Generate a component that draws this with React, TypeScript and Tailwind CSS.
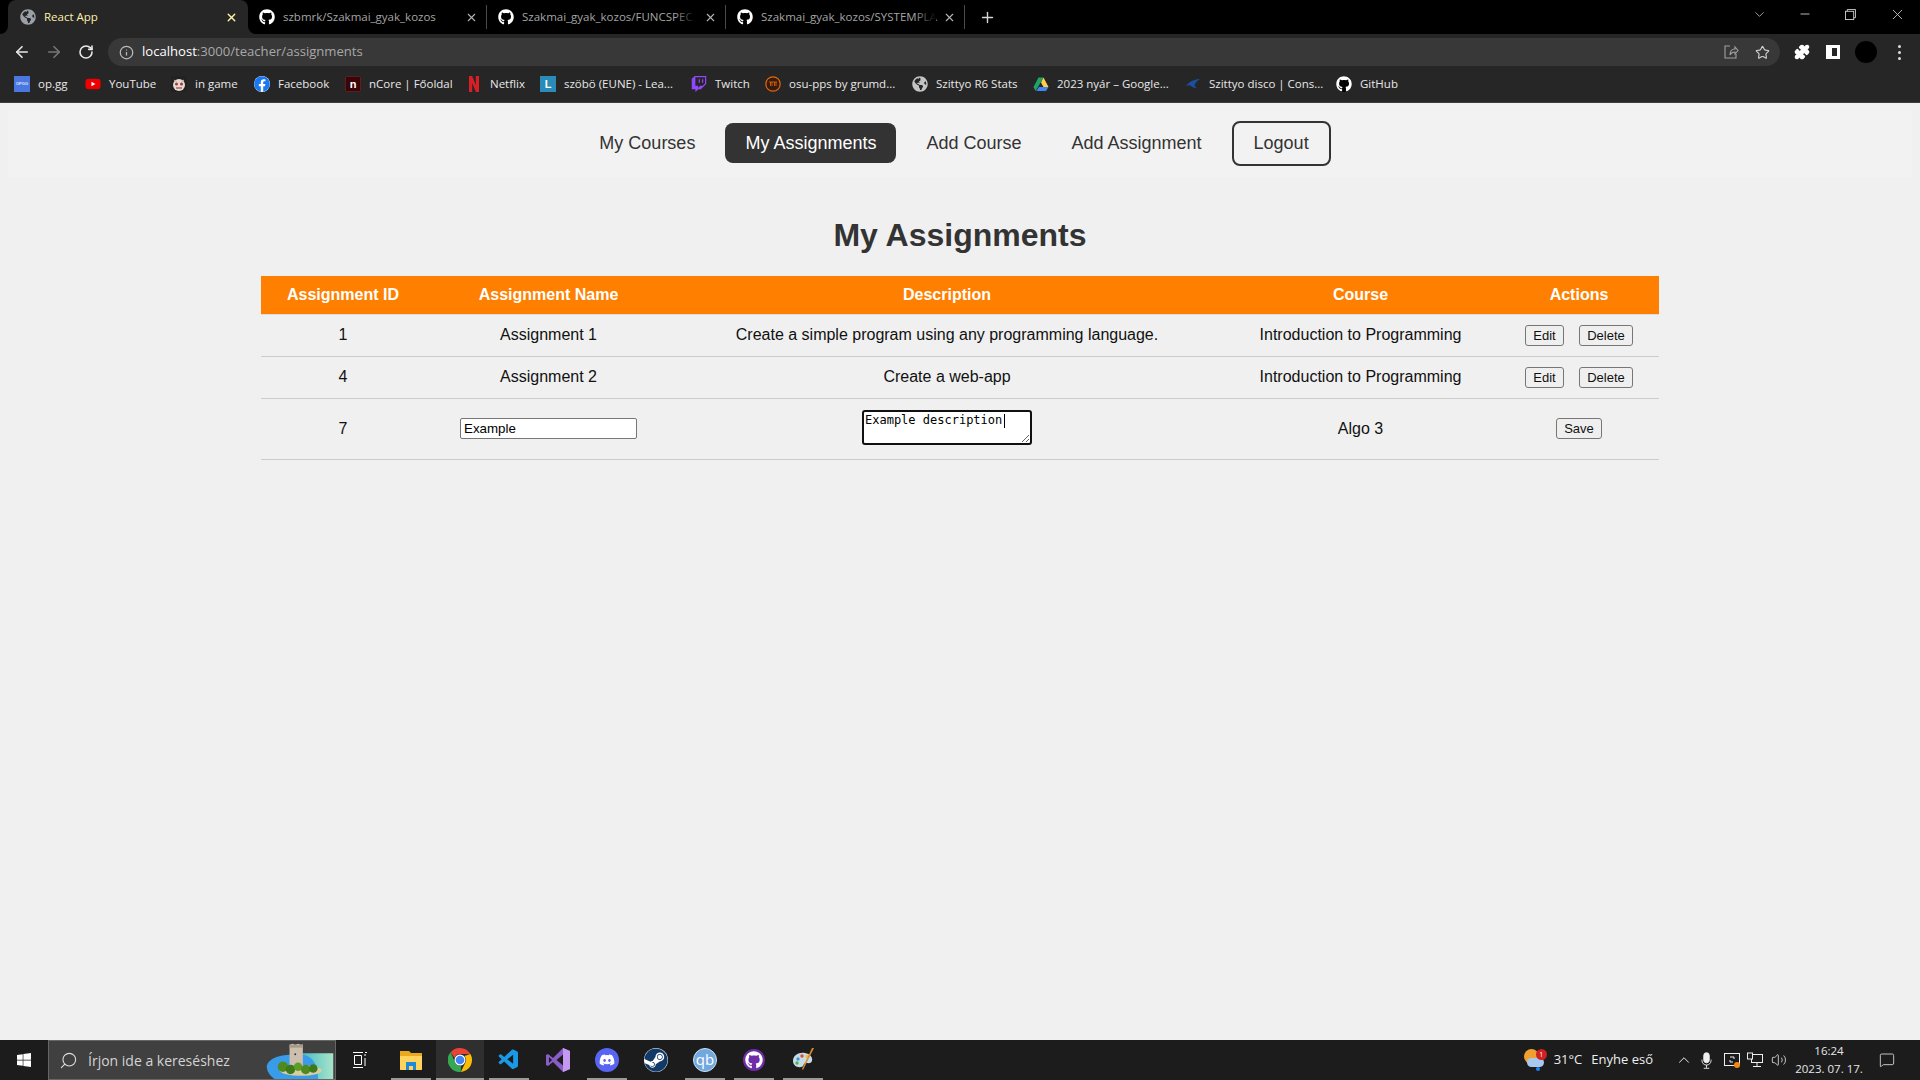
import { ArrowLeft, ArrowRight, RotateCw, Info, Star, Puzzle, X, Plus, ChevronDown, ChevronUp, Minus, Search, Volume2, MessageSquare } from "lucide-react";
import { FaGithub, FaGlobeAmericas, FaYoutube, FaFacebook, FaTwitch, FaDiscord, FaSteam, FaWindows } from "react-icons/fa";
import { VscVscode } from "react-icons/vsc";
import type { ReactNode } from "react";

const sans = "font-['Open_Sans','Noto_Sans',sans-serif]";

function GithubFav() {
  return (
    <span className="w-4 h-4 rounded-full bg-black flex items-center justify-center shrink-0">
      <FaGithub className="w-4 h-4 text-white" />
    </span>
  );
}

function Tab({ title, width, textWidth, fade }: { title: string; width: string; textWidth: string; fade?: boolean }) {
  return (
    <div className={`flex items-center h-[34px] shrink-0 ${width}`}>
      <GithubFav />
      <span className={`relative ml-2 text-[11.500px] text-[#a5a5a5] whitespace-nowrap ${textWidth} ${sans}`}>
        {title}
        {fade && <span className="absolute right-0 top-0 bottom-0 w-[22px] bg-gradient-to-r from-transparent to-black" />}
      </span>
      <X className="w-[13px] h-[13px] text-[#b5b5b5] ml-auto mr-[8px]" strokeWidth={2} />
      <span className="w-px h-[24px] bg-[#4a4a4a]" />
    </div>
  );
}

function Drive() {
  return (
    <svg viewBox="0 0 16 16" className="w-4 h-4">
      <path d="M5.500 1.500h5L5 11 2.500 15 .5 11z" fill="#1fa463" />
      <path d="M10.500 1.500l5 9.500h-5L8 6.500z" fill="#ffd04b" />
      <path d="M3.300 15l2.700-4h9.500l-2.500 4z" fill="#4285f4" />
    </svg>
  );
}

const bookmarks: { icon: ReactNode; label: string; w: string }[] = [
  { icon: <span className="w-4 h-4 bg-[#4a78e0] text-[4px] font-bold text-white/80 flex items-center justify-center font-['Liberation_Sans',sans-serif]">OPGG</span>, label: "op.gg", w: "w-[31px]" },
  { icon: <span className="w-4 h-4 flex items-center justify-center relative"><span className="absolute w-2 h-2 bg-white" /><FaYoutube className="w-4 h-4 text-[#f00000] relative" /></span>, label: "YouTube", w: "w-[46px]" },
  { icon: <svg viewBox="0 0 16 16" className="w-4 h-4"><rect width="16" height="16" fill="#222" /><circle cx="8" cy="9" r="6" fill="#e8d8d0" /><circle cx="5.500" cy="8" r="1.500" fill="#a33" /><circle cx="10.500" cy="8" r="1.500" fill="#a33" /><path d="M5 12h6" stroke="#733" /><path d="M3 4l3 2M13 4l-3 2" stroke="#bbb" /></svg>, label: "in game", w: "w-[43px]" },
  { icon: <span className="w-4 h-4 flex items-center justify-center relative rounded-full bg-white"><FaFacebook className="w-4 h-4 text-[#1877f2]" /></span>, label: "Facebook", w: "w-[51px]" },
  { icon: <span className="w-4 h-4 bg-[#3a0508] border border-[#5a2020] rounded-[2px] text-white text-[11px] leading-[11px] font-bold flex items-center justify-center font-['Liberation_Sans',sans-serif]">n</span>, label: "nCore | Főoldal", w: "w-[81px]" },
  { icon: <svg viewBox="0 0 16 16" className="w-4 h-4"><path d="M3 0h3.200l3.600 9V0H13v16h-3.200L6.200 7v9H3z" fill="#d81f26" /></svg>, label: "Netflix", w: "w-[34px]" },
  { icon: <span className="w-4 h-4 bg-[#2a8ab8] text-white text-[11px] leading-[11px] font-bold flex items-center justify-center font-['Liberation_Sans',sans-serif]">L</span>, label: "szöbö (EUNE) - Lea...", w: "w-[111px]" },
  { icon: <FaTwitch className="w-4 h-4 text-[#9146ff]" />, label: "Twitch", w: "w-[34px]" },
  { icon: <svg viewBox="0 0 16 16" className="w-4 h-4"><circle cx="8" cy="8" r="7.200" fill="#3a1a08" stroke="#e06a14" strokeWidth="1.200" /><path d="M4 6h8M5.500 6v4M7 6v4M9.500 6v4M11 6v4" stroke="#e06a14" strokeWidth=".8" /></svg>, label: "osu-pps by grumd...", w: "w-[107px]" },
  { icon: <FaGlobeAmericas className="w-4 h-4 text-[#c4c4c4]" />, label: "Szittyo R6 Stats", w: "w-[81px]" },
  { icon: <Drive />, label: "2023 nyár – Google...", w: "w-[112px]" },
  { icon: <svg viewBox="0 0 16 16" className="w-4 h-4"><path d="M15 3C10 3 5 5 1 10c3-1 4-1 5 0 1 1 3 2 6 2-2-1-3-3-2-4 1-2 3-4 5-5z" fill="#1b4fa0" /></svg>, label: "Szittyo disco | Cons...", w: "w-[111px]" },
  { icon: <GithubFav />, label: "GitHub", w: "w-[37px]" },
];

function BrowserChrome() {
  return (
    <div className={`bg-[#262626] text-white shrink-0 ${sans}`}>
      {/* Tabs */}
      <div className="h-[34px] bg-black flex items-center pl-2">
        <div className="relative flex items-center w-[240px] h-[34px] bg-[#262626] rounded-t-lg pl-3 pr-[10px]">
          <svg viewBox="0 0 8 8" className="absolute -left-2 bottom-0 w-2 h-2"><path d="M8 0v8H0a8 8 0 0 0 8-8z" fill="#262626" /></svg>
          <svg viewBox="0 0 8 8" className="absolute -right-2 bottom-0 w-2 h-2"><path d="M0 0v8h8a8 8 0 0 1-8-8z" fill="#262626" /></svg>
          <FaGlobeAmericas className="w-4 h-4 text-[#9aa0a6]" />
          <span className="ml-2 text-[11.500px] text-[#fdf2a8]">React App</span>
          <X className="w-[13px] h-[13px] text-[#fdf2a8] ml-auto" strokeWidth={2.500} />
        </div>
        <div className="flex items-center pl-[11px]">
          <Tab title="szbmrk/Szakmai_gyak_kozos" width="w-[228px]" textWidth="w-[160px]" />
          <div className="w-[11px]" />
          <Tab title="Szakmai_gyak_kozos/FUNCSPEC." width="w-[228px]" textWidth="w-[174px]" fade />
          <div className="w-[11px]" />
          <Tab title="Szakmai_gyak_kozos/SYSTEMPLA" width="w-[228px]" textWidth="w-[175px]" fade />
        </div>
        <Plus className="w-[17px] h-[17px] text-[#d5d5d5] ml-[14px]" strokeWidth={2} />
        <div className="ml-auto mb-[6px] flex items-center text-[#d0d0d0]">
          <ChevronDown className="w-[15px] h-[15px]" strokeWidth={1.200} />
          <Minus className="w-[14px] h-[14px] ml-[31px]" strokeWidth={1.500} />
          <svg viewBox="0 0 12 12" className="w-[11px] h-[11px] ml-[33px]" fill="none" stroke="currentColor"><rect x=".5" y="2.500" width="9" height="9" /><path d="M2.500 2.500v-2h9v9h-2" /></svg>
          <X className="w-[17px] h-[17px] ml-[33px] mr-[14px]" strokeWidth={1.200} />
        </div>
      </div>
      {/* Address bar */}
      <div className="h-[34px] pt-[2px] flex items-center">
        <ArrowLeft className="w-[18px] h-[18px] ml-[13px] text-[#e8e8e8]" strokeWidth={2.200} />
        <ArrowRight className="w-[18px] h-[18px] ml-[14px] text-[#777]" strokeWidth={2.200} />
        <RotateCw className="w-4 h-4 ml-[15px] text-[#e8e8e8]" strokeWidth={2.400} />
        <div className="ml-[14px] w-[1672px] h-[28px] rounded-full bg-[#383838] flex items-center pl-[11px] pr-[10px]">
          <Info className="w-[15px] h-[15px] text-[#bbb]" />
          <span className="ml-[8px] text-[13.100px] text-white">localhost<span className="text-[#a8a8a8]">:3000/teacher/assignments</span></span>
          <svg viewBox="0 0 16 16" className="w-4 h-4 ml-auto" fill="none" stroke="#a0a0a0" strokeWidth="1.100"><path d="M7 2H2v12h11v-4" /><path d="M7 11c0-4 2-6 5-6V3l3 3.500L12 10V8c-2 0-4 1-5 3z" /></svg>
          <Star className="w-[15px] h-[15px] ml-4 text-[#d0d0d0]" strokeWidth={1.800} />
        </div>
        <Puzzle className="w-4 h-4 ml-[14px] text-white fill-white" />
        <span className="ml-[16px] w-[14px] h-[14px] border-white border-[3px] border-l-[6px] bg-[#262626] block" />
        <span className="ml-[15px] w-[22px] h-[22px] rounded-full bg-black block" />
        <span className="ml-[21px] flex flex-col gap-[3px]">
          <span className="w-[3px] h-[3px] rounded-full bg-[#ddd]" />
          <span className="w-[3px] h-[3px] rounded-full bg-[#ddd]" />
          <span className="w-[3px] h-[3px] rounded-full bg-[#ddd]" />
        </span>
      </div>
      {/* Bookmarks */}
      <div className="h-[35px] pb-[2px] flex items-center gap-[16px] pl-[14px] border-b border-[#3c3c3c]">
        {bookmarks.map((b) => (
          <div key={b.label} className="flex items-center gap-2 shrink-0">
            {b.icon}
            <span className={`text-[11.500px] text-[#e8e8e8] whitespace-nowrap ${b.w}`}>{b.label}</span>
          </div>
        ))}
      </div>
    </div>
  );
}

const navLinks = [
  { label: "My Courses" },
  { label: "My Assignments", active: true },
  { label: "Add Course" },
  { label: "Add Assignment" },
];

function Nav() {
  return (
    <nav className="mx-2 mt-2 h-[66px] bg-[#f2f2f2] flex items-center justify-center gap-[10px] pr-[10px] pb-[2px] text-[18px] text-[#333]">
      {navLinks.map((l) => (
        <a key={l.label} className={`px-[20px] h-[40px] flex items-center rounded-[8px] ${l.active ? "bg-[#333] text-white" : ""}`}>
          {l.label}
        </a>
      ))}
      <button className="px-[20px] h-[45px] rounded-[8px] border-2 border-[#333] text-[#333]">Logout</button>
    </nav>
  );
}

function SmallButton({ children, width }: { children: string; width: string }) {
  return (
    <button className={`h-[21px] text-[13px] leading-[15px] text-[#111] bg-[#efefef] border border-[#767676] rounded-[3px] ${width}`}>
      {children}
    </button>
  );
}

const rows = [
  { id: 1, name: "Assignment 1", description: "Create a simple program using any programming language.", course: "Introduction to Programming" },
  { id: 4, name: "Assignment 2", description: "Create a web-app", course: "Introduction to Programming" },
];

function Table() {
  const cell = "border-b border-[#ccc] text-center";
  return (
    <table className="w-[1398px] mx-auto table-fixed border-collapse text-[16px] text-[#111]">
      <thead>
        <tr className="h-[38px] bg-[#ff8000] text-white font-bold border-b border-[#ddd]">
          <th className="w-[164px]">Assignment ID</th>
          <th className="w-[247px]">Assignment Name</th>
          <th className="w-[550px]">Description</th>
          <th className="w-[277px]">Course</th>
          <th>Actions</th>
        </tr>
      </thead>
      <tbody>
        {rows.map((r) => (
          <tr key={r.id} className="h-[42px]">
            <td className={cell}>{r.id}</td>
            <td className={cell}>{r.name}</td>
            <td className={cell}>{r.description}</td>
            <td className={cell}>{r.course}</td>
            <td className={cell}>
              <div className="flex justify-center gap-[15px]">
                <SmallButton width="w-[39px]">Edit</SmallButton>
                <SmallButton width="w-[54px]">Delete</SmallButton>
              </div>
            </td>
          </tr>
        ))}
        <tr className="h-[61px]">
          <td className={cell}>7</td>
          <td className={cell}>
            <input
              readOnly
              value="Example"
              className="w-[177px] h-[21px] mb-[2px] px-[3px] text-[13.333px] text-black bg-white border border-[#767676] rounded-[2px] align-middle"
            />
          </td>
          <td className={cell}>
            <div className="relative w-[170px] h-[35px] mb-[2px] mx-auto">
              <textarea
                readOnly
                value="Example description"
                className="block w-[170px] h-[35px] px-[1px] pt-[1px] pb-0 text-[12px] leading-[14px] text-black bg-white border-2 border-[#101010] rounded-[3px] resize font-['DejaVu_Sans_Mono',monospace]"
              />
              <span className="absolute left-[142px] top-[4px] w-px h-[14px] bg-black" />
            </div>
          </td>
          <td className={cell}>Algo 3</td>
          <td className={cell}>
            <div className="flex justify-center mb-[1px]">
              <SmallButton width="w-[46px]">Save</SmallButton>
            </div>
          </td>
        </tr>
      </tbody>
    </table>
  );
}

function Island() {
  return (
    <svg viewBox="0 0 70 40" className="absolute right-0 top-0 w-[70px] h-[38px]">
      <defs>
        <linearGradient id="sea" x1="0" x2="1">
          <stop offset="0" stopColor="#35b4c4" />
          <stop offset="1" stopColor="#a8e4c8" />
        </linearGradient>
      </defs>
      <path d="M30 13h40v27H30z" fill="url(#sea)" />
      <path d="M0 26c2-8 14-12 34-12 10 0 20 6 20 26H8C3 36 0 32 0 26z" fill="#3a9be8" />
      <ellipse cx="36" cy="31" rx="22" ry="5.500" fill="#d8cfa0" />
      <path d="M24 4l3-1 3 1 3-1 3 1 2-.5 0 22H24z" fill="#cdbfae" />
      <path d="M24 4h14v3H24z" fill="#a89a8a" />
      <circle cx="30" cy="14" r="1" fill="#333" />
      <circle cx="17" cy="27" r="5.500" fill="#4e8a1e" />
      <circle cx="25" cy="30" r="5" fill="#3f7a1a" />
      <circle cx="33" cy="27" r="4.500" fill="#5e9c28" />
      <circle cx="41" cy="30" r="5" fill="#4e8a1e" />
      <circle cx="49" cy="29" r="4.500" fill="#3f7a1a" />
    </svg>
  );
}

function AppIcon({ under, active, children }: { under?: boolean; active?: boolean; children: ReactNode }) {
  return (
    <div className={`relative w-[48px] h-10 flex items-center justify-center shrink-0 ${active ? "bg-[#2f2f2f]" : ""}`}>
      {children}
      {under && <span className={`absolute bottom-0 h-[2px] bg-[#9a9a9a] ${active ? "inset-x-0" : "inset-x-1"}`} />}
    </div>
  );
}

function Taskbar() {
  return (
    <div className={`h-10 bg-[#1c1c1c] flex items-center shrink-0 text-white ${sans}`}>
      <div className="w-12 flex justify-center">
        <FaWindows className="w-4 h-4 text-white" />
      </div>
      <div className="relative w-[288px] h-10 bg-[#404040] border border-[#666] flex items-center pl-[10px]">
        <Search className="w-[19px] h-[19px] text-[#ddd] -scale-x-100" strokeWidth={1.400} />
        <span className="ml-[10px] text-[14px] text-[#d4d4d4]">Írjon ide a kereséshez</span>
        <Island />
      </div>
      <div className="w-[48px] flex justify-center">
        <svg viewBox="0 0 16 16" className="w-4 h-4" fill="none" stroke="#fff"><path d="M1 .5h10M1 15.500h10M2.500 3.500h7v9h-7zM13 2v2M13 6v8" /><path d="M13 .5h2" /></svg>
      </div>
      <div className="flex items-center gap-[1px] ml-[3px]">
        <AppIcon under>
          <svg viewBox="0 0 24 24" className="w-6 h-6"><path d="M1 3h9l2 2h11v16a1 1 0 0 1-1 1H2a1 1 0 0 1-1-1z" fill="#e8a820" /><path d="M1 8h22v13a1 1 0 0 1-1 1H2a1 1 0 0 1-1-1z" fill="#ffd35c" /><path d="M7 22v-8h10v8z" fill="#1c8ad8" /><path d="M10 22v-4h4v4z" fill="#ffd35c" /></svg>
        </AppIcon>
        <AppIcon under active>
          <svg viewBox="0 0 24 24" className="w-6 h-6">
            <path d="M12 0a12 12 0 0 1 10.400 6H12a6 6 0 0 0-5.600 3.800L2.600 4.300A12 12 0 0 1 12 0z" fill="#ea4335" />
            <path d="M22.400 6A12 12 0 0 1 12.800 24L17.200 15A6 6 0 0 0 16.500 8z" fill="#fbbc05" />
            <path d="M2.600 4.300L7.300 15A6 6 0 0 0 13 18l-.2 6A12 12 0 0 1 2.600 4.300z" fill="#34a853" />
            <circle cx="12" cy="12" r="5.500" fill="#fff" />
            <circle cx="12" cy="12" r="4.300" fill="#4285f4" />
          </svg>
        </AppIcon>
        <AppIcon under>
          <VscVscode className="w-6 h-6 text-[#1a9ae6]" />
        </AppIcon>
        <AppIcon>
          <svg viewBox="0 0 24 24" className="w-6 h-6"><path d="M17 0l7 3v18l-7 3-10-10-5 4-2-1V7l2-1 5 4z" fill="#8a5cc8" /><path d="M17 0l7 3v18l-7 3z" fill="#c49af0" /><path d="M17 6.500L10.500 12l6.500 5.500z" fill="#1c1c1c" /><path d="M3 9v6l3-3z" fill="#1c1c1c" /></svg>
        </AppIcon>
        <AppIcon under>
          <span className="w-6 h-6 rounded-full bg-[#5865f2] flex items-center justify-center">
            <FaDiscord className="w-4 h-4 text-white" />
          </span>
        </AppIcon>
        <AppIcon>
          <span className="w-6 h-6 rounded-full bg-white flex items-center justify-center">
            <FaSteam className="w-6 h-6 text-[#123a68]" />
          </span>
        </AppIcon>
        <AppIcon under>
          <span className="w-6 h-6 rounded-full bg-[#72a8e0] border border-[#cfe0f2] text-white text-[15px] leading-none flex items-center justify-center pb-[2px]">qb</span>
        </AppIcon>
        <AppIcon under>
          <span className="w-[22px] h-[22px] rounded-full bg-[#6f2da8] flex items-center justify-center">
            <FaGithub className="w-[18px] h-[18px] text-white" />
          </span>
        </AppIcon>
        <AppIcon under>
          <svg viewBox="0 0 24 24" className="w-6 h-6">
            <path d="M2 13c0-6 6-9 12-8 5 1 8 4 7 8-1 3-4 2-6 2-3 0-2 4-5 4-4 1-8-2-8-6z" fill="#c8dce8" />
            <circle cx="7" cy="11" r="1.700" fill="#3a9ad8" />
            <circle cx="11" cy="8" r="1.700" fill="#e04838" />
            <circle cx="16" cy="8.500" r="1.700" fill="#f0c030" />
            <circle cx="6" cy="15" r="1.700" fill="#50b848" />
            <path d="M23 0L12 22l-1-1L21 0z" fill="#d88a30" />
          </svg>
        </AppIcon>
      </div>
      {/* Tray */}
      <div className="ml-auto flex items-center h-10">
        <div className="relative w-[22px] h-[22px]">
          <span className="absolute left-0 top-0 w-[15px] h-[15px] rounded-full bg-[#f0a030]" />
          <span className="absolute left-[3px] top-[9px] w-[17px] h-[9px] rounded-full bg-[#a8c8f0]" />
          <span className="absolute left-[12px] bottom-0 w-[4px] h-[4px] rounded-full bg-[#2080f0]" />
          <span className="absolute right-[-1px] top-0 w-[11px] h-[11px] rounded-full bg-[#d02020] text-white text-[7px] leading-[11px] text-center">1</span>
        </div>
        <span className="ml-[8px] text-[13px] text-[#eee]">31°C</span>
        <span className="ml-[9px] text-[13px] text-[#eee]">Enyhe eső</span>
        <ChevronUp className="w-[18px] h-[18px] ml-[22px] text-[#eee]" strokeWidth={1.300} />
        <svg viewBox="0 0 12 18" className="w-[11px] h-[17px] ml-[8px]" fill="none" stroke="#eee"><rect x="3" y=".5" width="6" height="11" rx="3" fill="#eee" /><path d="M1 8v1a5 5 0 0 0 10 0V8M6 14v3M3 17.500h6" /></svg>
        <svg viewBox="0 0 16 16" className="w-4 h-4 ml-[12px]" fill="none" stroke="#eee"><rect x=".5" y="1.500" width="15" height="12" /><path d="M6 5h4v2M9 10H6V8" /><circle cx="13" cy="13" r="3" fill="#f08a10" stroke="none" /></svg>
        <svg viewBox="0 0 16 16" className="w-4 h-4 ml-[7px]" fill="none" stroke="#eee"><rect x="4.500" y="2.500" width="11" height="8" /><rect x=".5" y="1" width="5" height="6" fill="#1c1c1c" /><path d="M10 11v3M6 14.500h8" /></svg>
        <Volume2 className="w-4 h-4 ml-[8px] text-[#eee]" strokeWidth={1.200} />
        <div className="ml-[9px] w-[66px] flex flex-col items-center text-[11.500px] leading-[18px] text-[#e6e6e6]">
          <span>16:24</span>
          <span className="whitespace-nowrap">2023. 07. 17.</span>
        </div>
        <MessageSquare className="w-4 h-4 ml-[17px] mr-[25px] text-[#eee]" strokeWidth={1.200} />
      </div>
    </div>
  );
}

export default function App() {
  return (
    <div className="w-[1920px] h-[1080px] flex flex-col overflow-hidden bg-[#f0f0f0] font-['Liberation_Sans',Arial,sans-serif]">
      <BrowserChrome />
      <main className="flex-1 min-h-0">
        <Nav />
        <h2 className="mt-[38px] mb-[21px] h-[40px] text-[32px] leading-[40px] font-bold text-[#333] text-center">My Assignments</h2>
        <Table />
      </main>
      <Taskbar />
    </div>
  );
}
